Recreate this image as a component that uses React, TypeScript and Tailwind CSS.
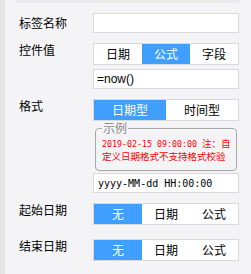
import React from 'react';

const cjk = { fontFamily: '"Noto Sans CJK SC", sans-serif' };

interface SegmentedProps {
  options: string[];
  active: number;
}

const Segmented: React.FC<SegmentedProps> = ({ options, active }) => (
  <div
    className={`h-[22px] border border-[#d9d9d9] bg-white grid ${options.length === 3 ? 'grid-cols-3' : 'grid-cols-2'}`}
  >
    {options.map((o, i) => (
      <div
        key={o}
        className={`flex items-center justify-center text-[12px] leading-none ${i === active ? 'bg-[#409eff] text-white' : 'text-black'}`}
      >
        {o}
      </div>
    ))}
  </div>
);

const Label: React.FC<{ text: string; offset?: string }> = ({ text, offset = 'mt-0' }) => (
  <div className={`w-[74px] shrink-0 text-[12px] leading-[14px] text-black ${offset}`}>{text}</div>
);

export default function App() {
  return (
    <div className="w-[251px] h-[274px] bg-[#f4f4f6] flex overflow-hidden" style={cjk}>
      <div className="w-[5px] h-full bg-[#e6e6e6] shrink-0" />
      <div className="flex-1 flex flex-col">
        <div className="ml-[10px] w-[224px] h-[3px] bg-[#ebebeb]" />

        <div className="flex ml-[14px] mt-[10px]">
          <Label text="标签名称" offset="mt-[3px]" />
          <div className="w-[146px] h-[20px] border border-[#d9d9d9] bg-white" />
        </div>

        <div className="flex ml-[14px] mt-[10px]">
          <Label text="控件值" />
          <div className="w-[146px] flex flex-col">
            <Segmented options={['日期', '公式', '字段']} active={1} />
            <div
              className="mt-[4px] h-[20px] border border-[#d9d9d9] bg-white pl-[3px] flex items-center text-[12px] text-black"
              style={{ fontFamily: '"Liberation Sans", sans-serif' }}
            >
              =now()
            </div>
          </div>
        </div>

        <div className="flex ml-[14px] mt-[10px]">
          <Label text="格式" />
          <div className="w-[146px] flex flex-col">
            <Segmented options={['日期型', '时间型']} active={0} />
            <fieldset className="mx-[2px] border border-[#a8a8a8] rounded-[4px] px-[6px] pb-[8px]">
              <legend className="ml-[0px] px-[1px] text-[12px] leading-[14px] text-[#8a8a8a]">示例</legend>
              <div className="pt-[2px] text-[9.5px] leading-[12px] text-[#ff0000] whitespace-nowrap">
                <span className="text-[8.3px]" style={{ fontFamily: '"DejaVu Sans Mono", monospace' }}>
                  2019-02-15&nbsp;09:00:00&nbsp;
                </span>
                注：自
                <br />
                定义日期格式不支持格式校验
              </div>
            </fieldset>
            <div
              className="mt-[2px] h-[20px] border border-[#d9d9d9] bg-white pl-[4px] flex items-center text-[10px] text-black"
              style={{ fontFamily: '"DejaVu Sans Mono", monospace' }}
            >
              yyyy-MM-dd HH:00:00
            </div>
          </div>
        </div>

        <div className="flex ml-[14px] mt-[10px]">
          <Label text="起始日期" />
          <div className="w-[146px]">
            <Segmented options={['无', '日期', '公式']} active={0} />
          </div>
        </div>

        <div className="flex ml-[14px] mt-[14px]">
          <Label text="结束日期" />
          <div className="w-[146px]">
            <Segmented options={['无', '日期', '公式']} active={0} />
          </div>
        </div>
      </div>
    </div>
  );
}
